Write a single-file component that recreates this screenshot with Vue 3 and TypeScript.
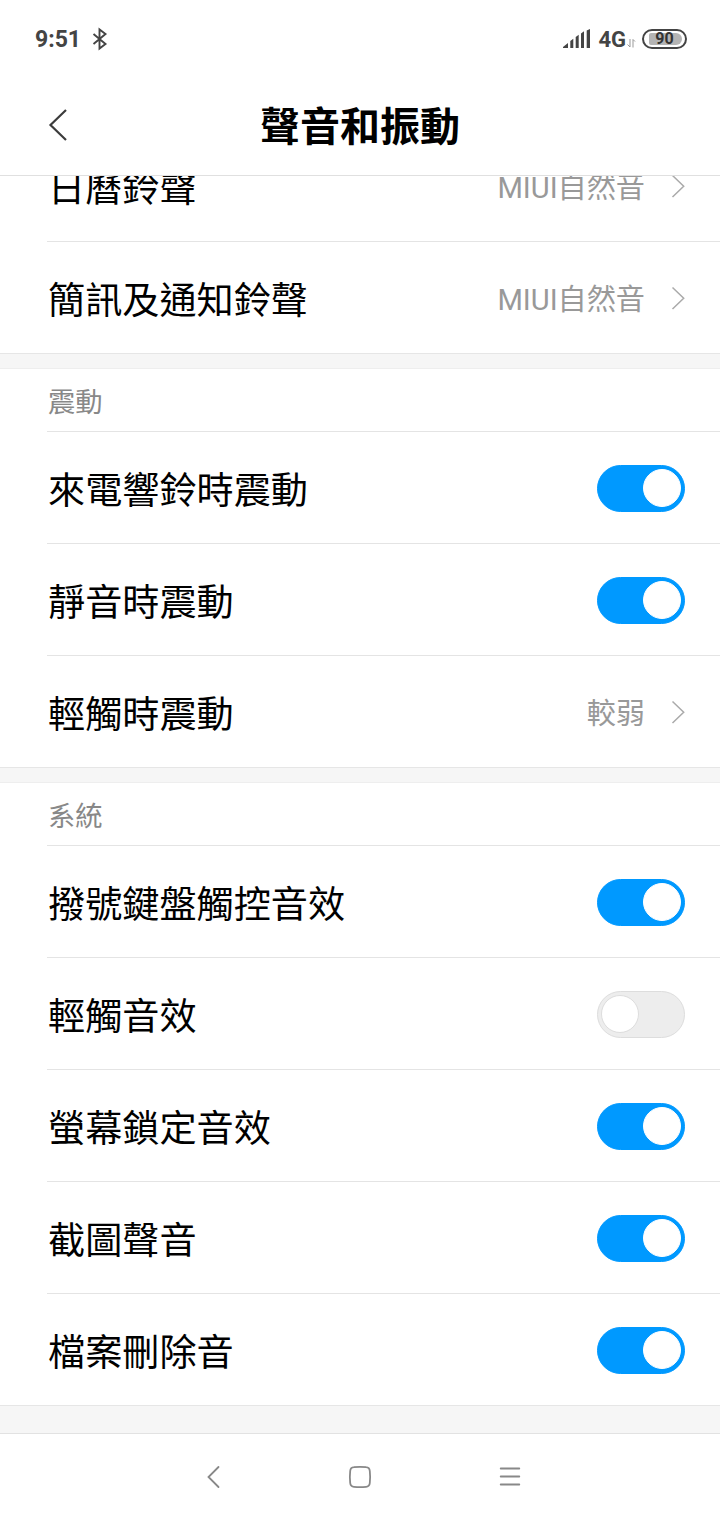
<script setup lang="ts">
interface Row { label: string; value?: string; on?: boolean }
interface Section { title?: string; rows: Row[] }
const sections: Section[] = [
  { rows: [
    { label: '日曆鈴聲', value: 'MIUI自然音' },
    { label: '簡訊及通知鈴聲', value: 'MIUI自然音' },
  ] },
  { title: '震動', rows: [
    { label: '來電響鈴時震動', on: true },
    { label: '靜音時震動', on: true },
    { label: '輕觸時震動', value: '較弱' },
  ] },
  { title: '系統', rows: [
    { label: '撥號鍵盤觸控音效', on: true },
    { label: '輕觸音效', on: false },
    { label: '螢幕鎖定音效', on: true },
    { label: '截圖聲音', on: true },
    { label: '檔案刪除音', on: true },
  ] },
]
</script>

<template>
  <div class="screen">
    <div class="status">
      <span class="time">9:51</span>
      <svg class="bt" width="16" height="24" viewBox="0 0 16 24"><path d="M1.500 7 13.500 17 7.500 21.500V2.500L13.500 7 1.500 17" fill="none" stroke="#444" stroke-width="1.9" /></svg>
      <span class="fill"></span>
      <svg class="signal" width="28" height="20" viewBox="0 0 28 20"><path d="M0 19v-1l5-4v5zM7.300 19v-7l3-2.300V19zM12.700 19V8l3-2.300V19zM18 19V4.500l3-2.200V19zM23.700 19V1.500L27 0v19z" fill="#444" /></svg>
      <span class="net">4G</span>
      <svg class="arrows" width="9" height="10" viewBox="0 0 9 10"><path d="M3 1v8L.5 6.500M6 9.500V1.500l2 2" fill="none" stroke="#999" /></svg>
      <span class="battery"><span class="level"><span class="pct">90</span></span></span>
    </div>
    <header class="header">
      <svg class="back" width="20" height="34" viewBox="0 0 20 34"><path d="M18 2 2.500 17l15.500 15" fill="none" stroke="#3c3c3c" stroke-width="2.2" /></svg>
      <h1>聲音和振動</h1>
    </header>
    <main class="list">
      <section v-for="(s, i) in sections" :key="i" class="section">
        <div v-if="s.title" class="caption">{{ s.title }}</div>
        <div v-for="r in s.rows" :key="r.label" class="row">
          <span class="label">{{ r.label }}</span>
          <template v-if="r.value">
            <span class="value">{{ r.value }}</span>
            <svg class="chevron" width="14" height="24" viewBox="0 0 14 24"><path d="M1.500 1.500 12.700 12.200 1.500 23" fill="none" stroke="#aaa" stroke-width="1.5" /></svg>
          </template>
          <span v-else class="toggle" :class="{ on: r.on }"><span class="knob"></span></span>
        </div>
      </section>
    </main>
    <nav class="nav">
      <svg width="24" height="24" viewBox="0 0 24 24"><path d="M20.500 2 10.500 12l10 10" /></svg>
      <svg width="24" height="24" viewBox="0 0 24 24"><path d="M6 2.200Q12 1.500 18 2.200Q21.500 2.500 21.800 6Q22.500 12 21.800 18Q21.500 21.500 18 21.800Q12 22.500 6 21.800Q2.500 21.500 2.200 18Q1.500 12 2.200 6Q2.500 2.500 6 2.200Z" /></svg>
      <svg width="24" height="24" viewBox="0 0 24 24"><path d="M2.700 3.500h18.600M2.700 11.500h18.600M2.700 19.500h18.600" /></svg>
    </nav>
  </div>
</template>

<style>
body { margin: 0; }
</style>
<style scoped>
.screen { width: 720px; height: 1520px; display: flex; flex-direction: column; background: #fff; overflow: hidden; font-family: Roboto, "Noto Sans CJK TC", sans-serif; color: #000; }
.status { height: 76px; box-sizing: border-box; flex: none; display: flex; align-items: center; padding: 2px 33px 0 35px; color: #444; }
.time { font-size: 23px; font-weight: 700; padding-top: 1px; }
.bt { margin-left: 11px; }
.fill { flex: 1; }
.net { font-size: 22px; font-weight: 700; margin-left: 8px; padding-top: 1px; }
.arrows { margin: 8px 6px 0 1px; }
.battery { width: 45px; height: 20px; box-sizing: border-box; border: 2px solid #444; border-radius: 10px; padding: 2px 3px 2px 5px; display: flex; }
.level { flex: 1; border-radius: 2px 6px 6px 2px; background: #b4b4b4; display: flex; justify-content: center; align-items: center; }
.pct { font-size: 16px; line-height: 12px; font-weight: 700; color: #333; margin-right: 2px; }
.signal { margin-right: -1px; }
.header { height: 100px; box-sizing: border-box; flex: none; display: grid; grid-template-columns: 100px 1fr 100px; align-items: center; border-bottom: 1px solid #e0e0e0; }
.back { margin: -2px 0 0 48px; }
h1 { margin: 0; padding-top: 5px; text-align: center; font-size: 40px; line-height: 60px; font-weight: 700; }
.list { height: 1257px; flex: none; display: flex; flex-direction: column; justify-content: flex-end; background: #f6f6f6; overflow: hidden; }
.section { flex: none; background: #fff; border-bottom: 1px solid #e6e6e6; margin-bottom: 15px; }
.section + .section { box-shadow: 0 -1px #eee; }
.section:last-child { margin-bottom: 27px; }
.caption { height: 62px; margin-left: 47px; padding-left: 1px; color: #888; font-size: 27.300px; line-height: 69px; border-bottom: 1px solid #e4e4e4; }
.row { height: 111px; margin-left: 47px; padding: 0 35px 0 1px; display: flex; align-items: center; }
.row + .row { border-top: 1px solid #e4e4e4; }
.label { flex: 1; font-size: 37.150px; padding-top: 1px; }
.value { font-size: 29.150px; color: #999; padding-bottom: 2px; }
.chevron { margin-left: 26px; }
.toggle { width: 88px; height: 47px; box-sizing: border-box; margin-top: 1px; padding: 3px; border-radius: 24px; background: #ededed; border: 1px solid #ddd; display: flex; align-items: center; }
.toggle.on { background: #0099ff; border-color: #0099ff; justify-content: flex-end; }
.knob { width: 38px; height: 38px; box-sizing: border-box; border-radius: 50%; background: #fff; border: 1px solid #ddd; }
.on .knob { border-color: #fff; }
.nav { flex: 1; border-top: 1px solid #e2e2e2; display: flex; justify-content: center; align-items: center; gap: 126px; }
.nav svg { fill: none; stroke: #888; stroke-width: 1.800; stroke-linecap: round; }
</style>
